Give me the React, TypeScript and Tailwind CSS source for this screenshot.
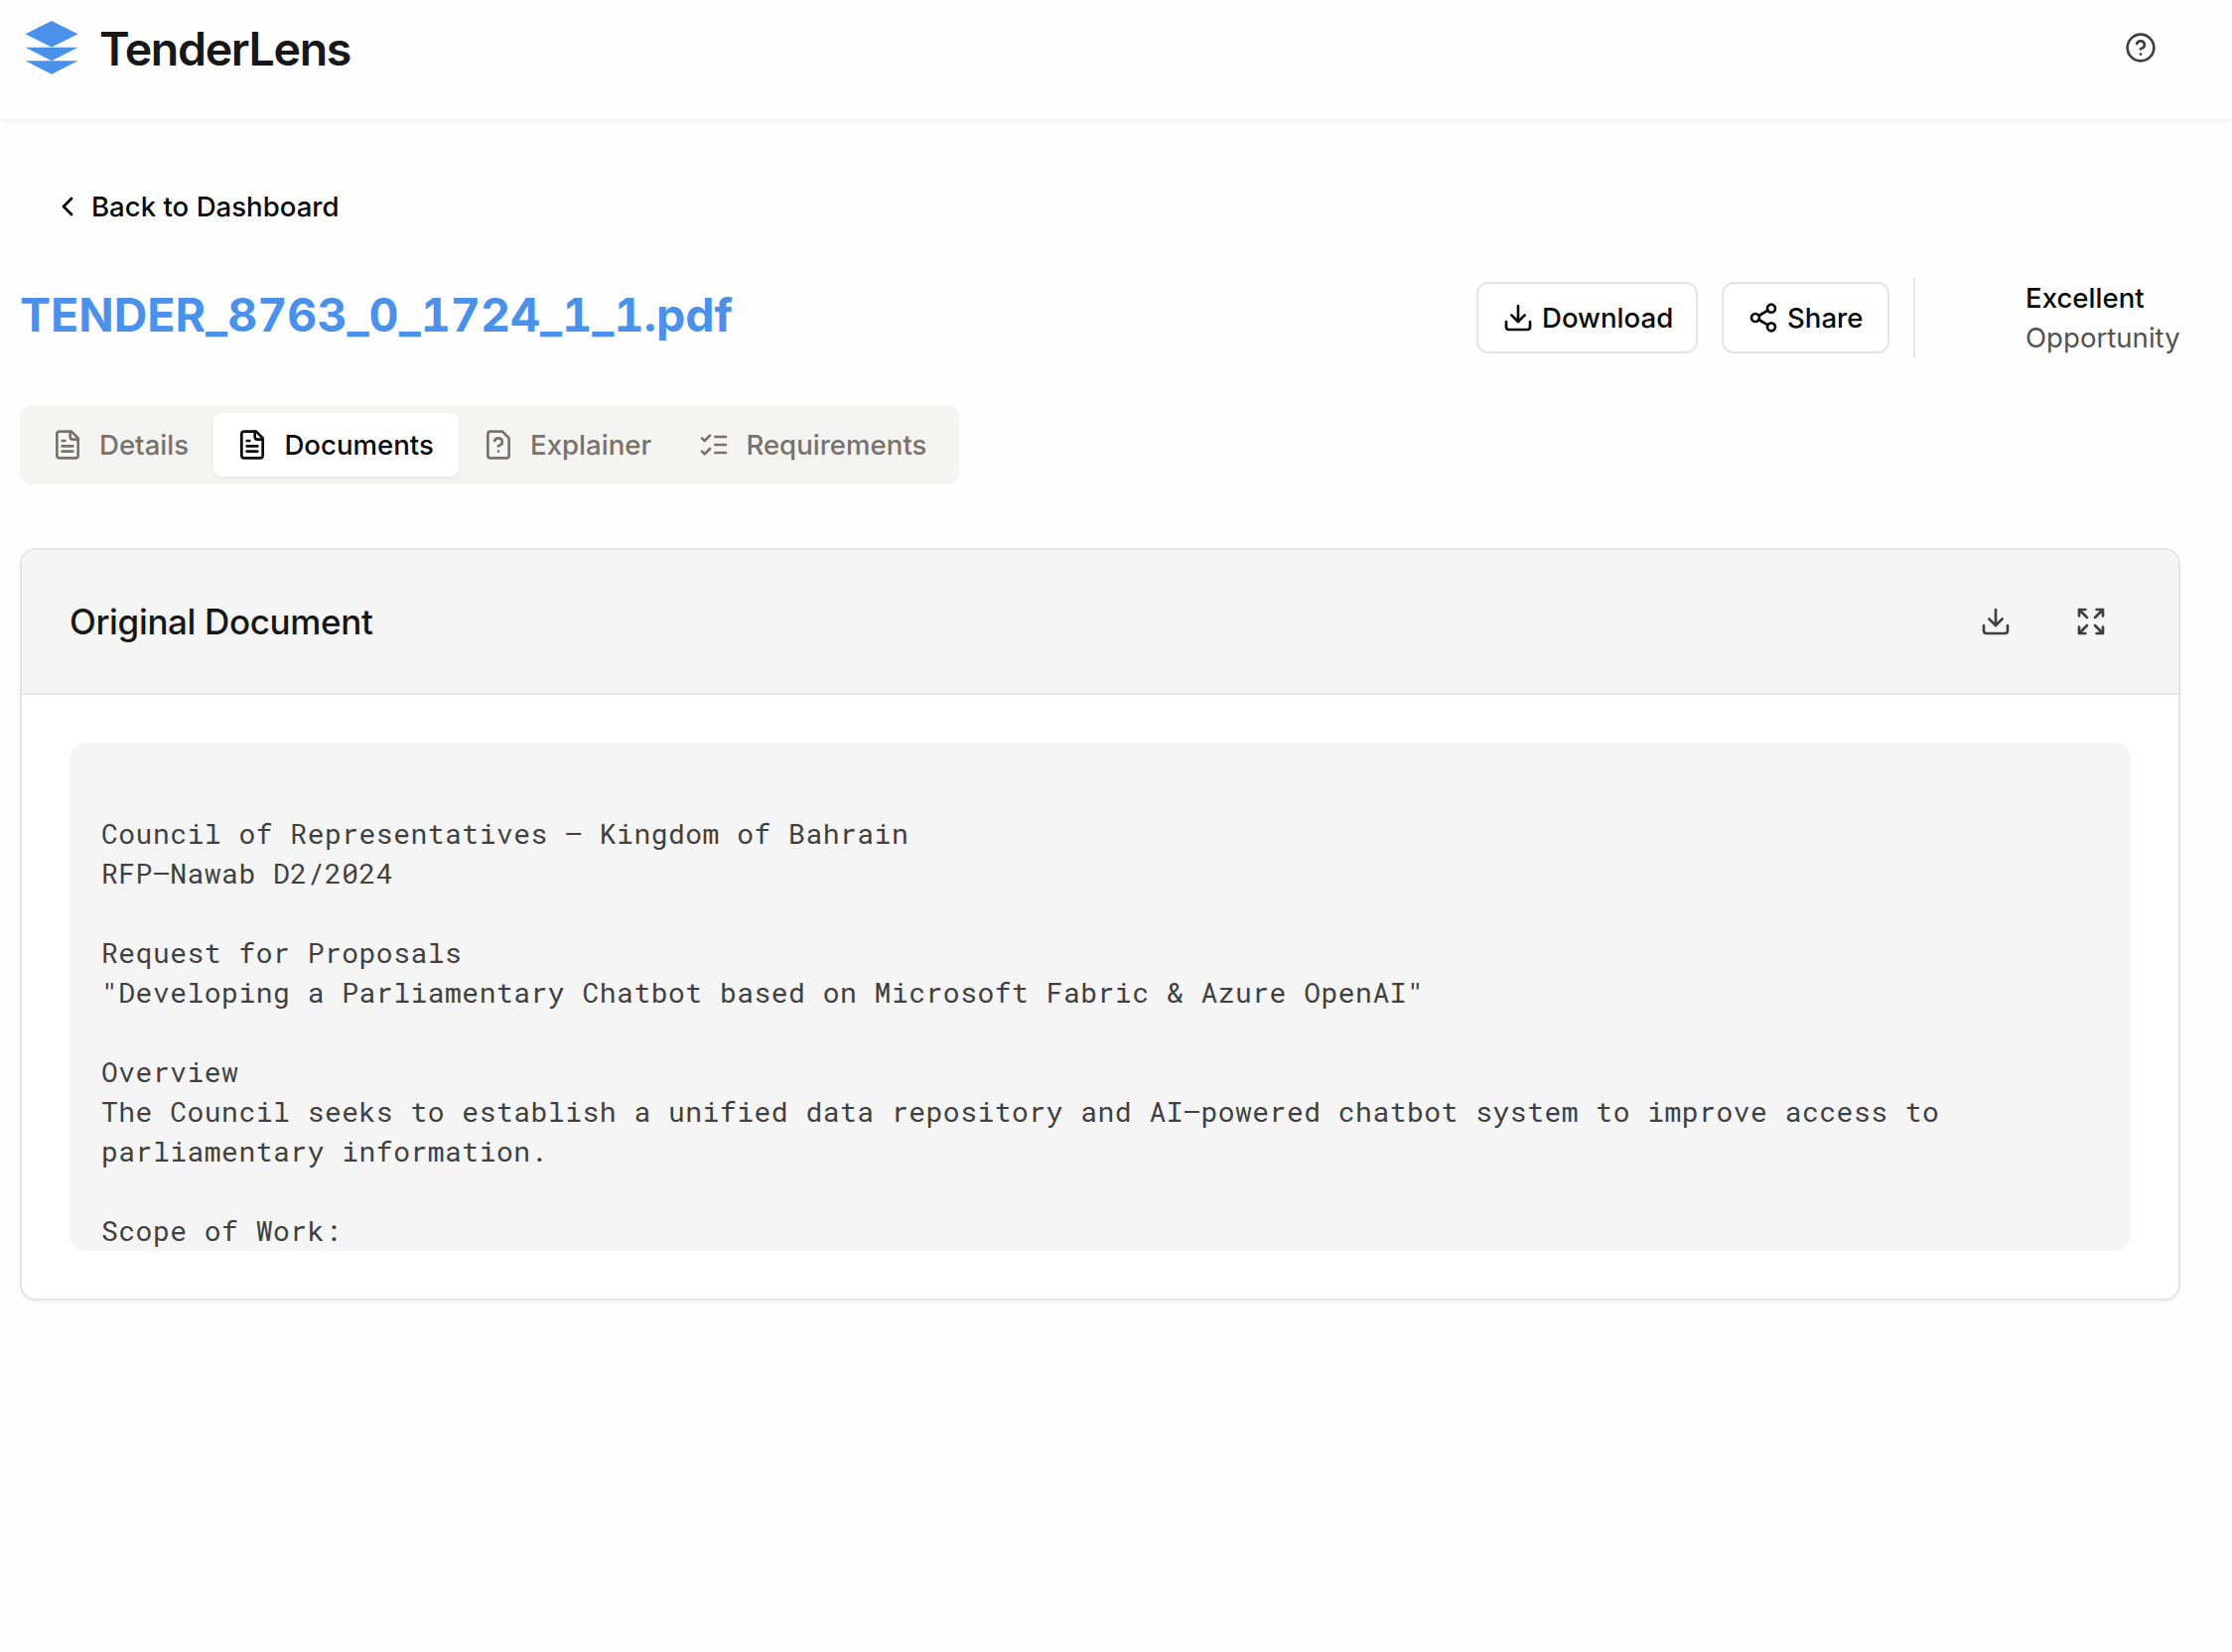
import React from "react";

type IconProps = { className?: string; children: React.ReactNode };

function Icon({ className = "", children }: IconProps) {
  return (
    <svg
      viewBox="0 0 24 24"
      fill="none"
      stroke="currentColor"
      strokeWidth={2}
      strokeLinecap="round"
      strokeLinejoin="round"
      className={`size-8 shrink-0 ${className}`}
    >
      {children}
    </svg>
  );
}

const filePath = "M15 2H6a2 2 0 0 0-2 2v16a2 2 0 0 0 2 2h12a2 2 0 0 0 2-2V7Z";

const FileText = () => (
  <Icon>
    <path d={filePath} />
    <path d="M14 2v4a2 2 0 0 0 2 2h4" />
    <path d="M10 9H8" />
    <path d="M16 13H8" />
    <path d="M16 17H8" />
  </Icon>
);

const FileQuestion = () => (
  <Icon>
    <path d="M12 17h.01" />
    <path d={filePath} />
    <path d="M9.1 9a3 3 0 0 1 5.82 1c0 2-3 3-3 3" />
  </Icon>
);

const ListChecks = () => (
  <Icon>
    <path d="m3 17 2 2 4-4" />
    <path d="m3 7 2 2 4-4" />
    <path d="M13 6h8" />
    <path d="M13 12h8" />
    <path d="M13 18h8" />
  </Icon>
);

const Download = () => (
  <Icon>
    <path d="M21 15v4a2 2 0 0 1-2 2H5a2 2 0 0 1-2-2v-4" />
    <path d="m7 10 5 5 5-5" />
    <path d="M12 15V3" />
  </Icon>
);

const Share = () => (
  <Icon>
    <circle cx="18" cy="5" r="3" />
    <circle cx="6" cy="12" r="3" />
    <circle cx="18" cy="19" r="3" />
    <path d="m8.59 13.51 6.83 3.98" />
    <path d="m15.41 6.51-6.82 3.98" />
  </Icon>
);

const Expand = () => (
  <Icon>
    <path d="m21 21-6-6m6 6v-4.8m0 4.8h-4.8" />
    <path d="M3 16.2V21m0 0h4.8M3 21l6-6" />
    <path d="M21 7.8V3m0 0h-4.8M21 3l-6 6" />
    <path d="M3 7.8V3m0 0h4.8M3 3l6 6" />
  </Icon>
);

const Help = () => (
  <Icon>
    <circle cx="12" cy="12" r="10" />
    <path d="M9.09 9a3 3 0 0 1 5.83 1c0 2-3 3-3 3" />
    <path d="M12 17h.01" />
  </Icon>
);

const ChevronLeft = () => (
  <Icon>
    <path d="m15 18-6-6 6-6" />
  </Icon>
);

const Logo = () => (
  <svg viewBox="0 0 54 54" className="h-[54px] w-[54px] shrink-0" fill="#4991eb">
    <path d="M27 0 53.5 13.3 27 26.6 .5 13.3Z" />
    <path d="M.5 26.8h53L27 40.2Z" />
    <path d="M.5 40.3h53L27 53.8Z" />
  </svg>
);

const tabs = [
  { label: "Details", icon: <FileText />, width: "w-[187px] pl-6" },
  { label: "Documents", icon: <FileText />, width: "w-[247px] pl-[23.4px]", active: true },
  { label: "Explainer", icon: <FileQuestion />, width: "w-[217.4px] pl-6" },
  { label: "Requirements", icon: <ListChecks />, width: "w-[278.6px] pl-6" },
];

const documentText = `
Council of Representatives – Kingdom of Bahrain
RFP–Nawab D2/2024

Request for Proposals
"Developing a Parliamentary Chatbot based on Microsoft Fabric & Azure OpenAI"

Overview
The Council seeks to establish a unified data repository and AI–powered chatbot system to improve access to parliamentary information.

Scope of Work:
`;

export default function App() {
  return (
    <div className="min-h-[1664px] w-full bg-[#fefefe] font-['Inter',sans-serif] text-[27.6px] leading-10 font-medium text-neutral-950">
      <header className="flex h-[120px] items-start justify-between bg-[#fefefe] pr-[76px] pl-[25px] shadow-[0_2px_4px_rgba(0,0,0,0.05)]">
        <div className="flex items-start gap-[21px] pt-[21px]">
          <Logo />
          <span className="pt-px text-[46.5px] leading-[54px] font-semibold tracking-[-1.35px] text-neutral-900">
            TenderLens
          </span>
        </div>
        <button className="mt-8 text-neutral-700">
          <Help />
        </button>
      </header>

      <main className="pr-[52px] pl-5">
        <button className="mt-[68px] flex h-10 items-center gap-2 pl-8">
          <ChevronLeft />
          <span>Back to Dashboard</span>
        </button>

        <div className="mt-[52px] flex h-20 items-center">
          <h1 className="flex-1 pb-1.5 text-[46.5px] leading-[56px] font-bold tabular-nums text-[#4991eb]">
            TENDER_8763_0_1724_1_1.pdf
          </h1>
          <div className="flex items-center gap-6">
            <button className="flex h-[72px] w-[223px] items-center gap-2 rounded-xl border-2 border-neutral-200 bg-white pl-6">
              <Download />
              <span>Download</span>
            </button>
            <button className="flex h-[72px] w-[169px] items-center gap-2 rounded-xl border-2 border-neutral-200 bg-white pl-6">
              <Share />
              <span>Share</span>
            </button>
            <div className="h-20 w-0.5 bg-neutral-200" />
          </div>
          <div className="ml-[111px] w-[156px] whitespace-nowrap">
            <div>Excellent</div>
            <div className="font-normal text-neutral-600">Opportunity</div>
          </div>
        </div>

        <div className="mt-12 flex h-20 w-[946px] rounded-xl bg-[#f4f4f2] p-2 text-stone-500">
          {tabs.map((tab) => (
            <button
              key={tab.label}
              className={`flex items-center gap-4 rounded-lg ${tab.width} ${
                tab.active ? "bg-white text-neutral-950 shadow-[0_2px_4px_rgba(0,0,0,0.05)]" : ""
              }`}
            >
              {tab.icon}
              <span>{tab.label}</span>
            </button>
          ))}
        </div>

        <section className="mt-16 overflow-hidden rounded-2xl border-2 border-neutral-200 bg-white shadow-[0_2px_4px_rgba(0,0,0,0.05)]">
          <div className="flex h-[146px] items-center justify-between border-b-2 border-neutral-200 bg-[#f5f5f5] px-12">
            <h2 className="pb-px text-[35px] leading-[56px] font-medium tracking-[-0.35px] text-neutral-900">Original Document</h2>
            <div className="flex gap-4 text-neutral-700">
              <button className="grid size-20 place-items-center">
                <Download />
              </button>
              <button className="grid size-20 place-items-center">
                <Expand />
              </button>
            </div>
          </div>
          <div className="p-12">
            <div className="h-[512px] overflow-hidden rounded-2xl bg-[#f5f5f5] px-8 pt-8">
              <pre className="font-['Roboto_Mono','Liberation_Mono',monospace] text-[28px] leading-10 font-normal tracking-[0.5px] whitespace-pre-wrap text-neutral-700">
                {documentText}
              </pre>
            </div>
          </div>
        </section>
      </main>
    </div>
  );
}
